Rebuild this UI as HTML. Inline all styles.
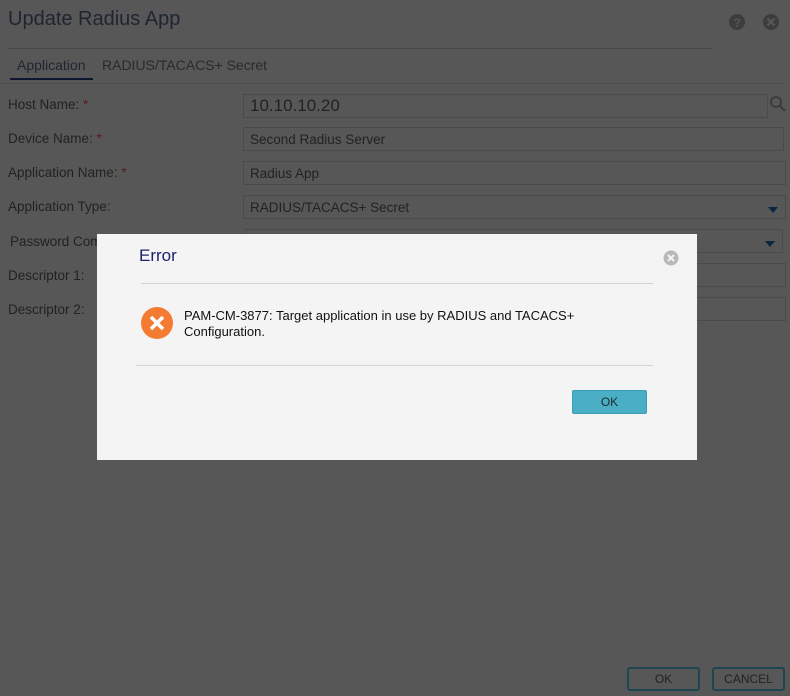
<!DOCTYPE html>
<html><head><meta charset="utf-8"><style>
*{margin:0;padding:0;box-sizing:border-box}
body{width:790px;height:696px;background:#575757;font-family:"Liberation Sans",sans-serif;position:relative;overflow:hidden;color:#1e1e1e}
.a{position:absolute}
.lbl{position:absolute;left:8px;font-size:13.5px;color:#222}
.lbl b{color:#5a1a1a;font-weight:normal}
.inp{position:absolute;left:243px;height:24px;border:1px solid #4a4a4a;font-size:13.5px;padding:4px 0 0 6px;color:#222}
.arr{position:absolute;width:0;height:0;border-left:5px solid transparent;border-right:5px solid transparent;border-top:6px solid #0b2740}
</style></head><body>
<div class="a" style="left:8px;top:8px;font-size:20px;color:#1e2530">Update Radius App</div>
<svg class="a" style="left:728px;top:13px" width="18" height="18"><circle cx="9" cy="9" r="8" fill="#3d3d3d"/><text x="9" y="14" font-size="12" font-weight="bold" text-anchor="middle" fill="#575757" font-family="Liberation Sans">?</text></svg>
<svg class="a" style="left:762px;top:13px" width="18" height="18"><circle cx="9" cy="9" r="8" fill="#3d3d3d"/><path d="M5.5 5.5L12.5 12.5M12.5 5.5L5.5 12.5" stroke="#575757" stroke-width="2.2"/></svg>
<div class="a" style="left:8px;top:48px;width:704px;height:1px;background:#474747"></div>
<div class="a" style="left:17px;top:57px;font-size:14px;color:#1e2530">Application</div>
<div class="a" style="left:102px;top:57px;font-size:14px;color:#2a2a2a">RADIUS/TACACS+ Secret</div>
<div class="a" style="left:10px;top:78px;width:83px;height:2px;background:#0e1630"></div>
<div class="a" style="left:0;top:83px;width:785px;height:1px;background:#4c4c4c"></div>
<div class="lbl" style="top:97px">Host Name: <b>*</b></div>
<div class="inp" style="top:94px;width:525px;font-size:17px;padding-top:1px">10.10.10.20</div>
<svg class="a" style="left:769px;top:95px" width="18" height="18"><circle cx="7" cy="7" r="5" fill="none" stroke="#3a3a3a" stroke-width="1.8"/><path d="M10.5 10.5L16 16" stroke="#3a3a3a" stroke-width="2.2"/></svg>
<div class="lbl" style="top:131px">Device Name: <b>*</b></div>
<div class="inp" style="top:127px;width:541px">Second Radius Server</div>
<div class="lbl" style="top:165px">Application Name: <b>*</b></div>
<div class="inp" style="top:161px;width:543px">Radius App</div>
<div class="lbl" style="top:199px">Application Type:</div>
<div class="inp" style="top:195px;width:543px">RADIUS/TACACS+ Secret</div>
<div class="arr" style="left:768px;top:207px"></div>
<div class="lbl" style="top:234px;left:10px">Password Com</div>
<div class="inp" style="top:229px;left:245px;width:538px"></div>
<div class="arr" style="left:765px;top:241px"></div>
<div class="lbl" style="top:268px">Descriptor 1:</div>
<div class="inp" style="top:263px;width:543px"></div>
<div class="lbl" style="top:302px">Descriptor 2:</div>
<div class="inp" style="top:297px;width:543px"></div>
<div class="a" style="left:627px;top:667px;width:73px;height:24px;border:2px solid #1f4550;border-radius:3px;font-size:12px;text-align:center;line-height:20px;color:#222">OK</div>
<div class="a" style="left:712px;top:667px;width:73px;height:24px;border:2px solid #1f4550;border-radius:3px;font-size:12px;text-align:center;line-height:20px;color:#222">CANCEL</div>

<div class="a" style="left:97px;top:234px;width:600px;height:226px;background:#f4f4f4">
<div class="a" style="left:42px;top:12px;font-size:17px;color:#1c1f6e">Error</div>
<svg class="a" style="left:566px;top:16px" width="16" height="16"><circle cx="8" cy="8" r="7.5" fill="#b8b8b8"/><path d="M5 5L11 11M11 5L5 11" stroke="#f4f4f4" stroke-width="2"/></svg>
<div class="a" style="left:44px;top:49px;width:512px;height:1px;background:#d4d4d4"></div>
<svg class="a" style="left:44px;top:73px" width="32" height="32"><circle cx="16" cy="16" r="16" fill="#f47b32"/><path d="M10 10L22 22M22 10L10 22" stroke="#fff" stroke-width="3.5"/></svg>
<div class="a" style="left:87px;top:74px;font-size:13px;line-height:15.5px;color:#111">PAM-CM-3877: Target application in use by RADIUS and TACACS+<br>Configuration.</div>
<div class="a" style="left:39px;top:131px;width:517px;height:1px;background:#d4d4d4"></div>
<div class="a" style="left:475px;top:156px;width:75px;height:24px;background:#4aafc5;border:1px solid #3a9db3;border-radius:2px;font-size:12px;text-align:center;line-height:22px;color:#1a2a30">OK</div>
</div>
</body></html>
